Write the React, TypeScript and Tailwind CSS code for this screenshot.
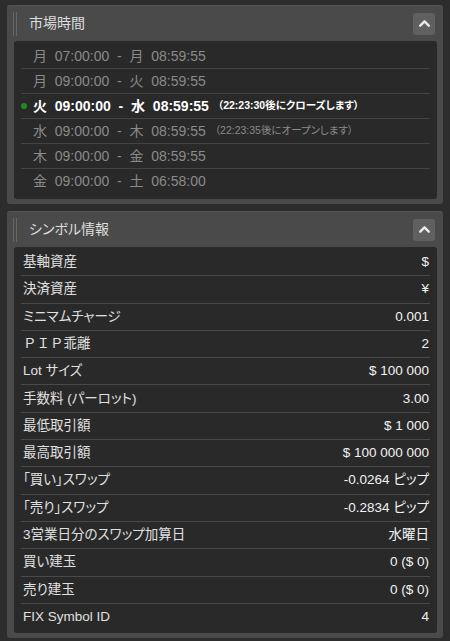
import { ChevronUp } from 'lucide-react';

const hours = [
    { from: '月  07:00:00', to: '月  08:59:55' },
    { from: '月  09:00:00', to: '火  08:59:55' },
    { from: '火  09:00:00', to: '水  08:59:55', note: '（22:23:30後にクローズします）', active: true },
    { from: '水  09:00:00', to: '木  08:59:55', note: '（22:23:35後にオープンします）' },
    { from: '木  09:00:00', to: '金  08:59:55' },
    { from: '金  09:00:00', to: '土  06:58:00' },
];

const symbolInfo: [string, string][] = [
    ['基軸資産', '$'],
    ['決済資産', '¥'],
    ['ミニマムチャージ', '0.001'],
    ['ＰＩＰ乖離', '2'],
    ['Lot サイズ', '$ 100 000'],
    ['手数料 (パーロット)', '3.00'],
    ['最低取引額', '$ 1 000'],
    ['最高取引額', '$ 100 000 000'],
    ['「買い」スワップ', '-0.0264 ピップ'],
    ['「売り」スワップ', '-0.2834 ピップ'],
    ['3営業日分のスワップ加算日', '水曜日'],
    ['買い建玉', '0 ($ 0)'],
    ['売り建玉', '0 ($ 0)'],
    ['FIX Symbol ID', '4'],
];

const PanelHeader = ({ title }: { title: string }) => (
    <div className="h-[35px] flex items-center pl-[6px] pr-[8px]">
        <div className="flex gap-[2px] h-[24px]">
            <div className="w-px h-full bg-[#666]" />
            <div className="w-px h-full bg-[#666]" />
        </div>
        <span className="ml-[12px] text-[14px] text-[#dedede]">{title}</span>
        <button className="ml-auto w-[22px] h-[22px] rounded-[3px] bg-[#606060] flex items-center justify-center">
            <ChevronUp size={17} strokeWidth={3.4} className="text-[#e8e8e8]" />
        </button>
    </div>
);

export default function App() {
    return (
        <div className="w-[450px] h-[641px] bg-[#2d2d2d] pt-[5px] px-[7px] font-['Liberation_Sans','Noto_Sans_CJK_JP',sans-serif] [font-feature-settings:'palt']">
            {/* 市場時間 */}
            <div className="bg-[#4a4a4a] border-t border-[#555] rounded-[3px] pb-[5px]">
                <PanelHeader title="市場時間" />
                <div className="bg-[#292929] rounded-[3px] ml-[7px] mr-[6px] px-[7px] pt-[3px] pb-[5px]">
                    {hours.map((h, i) => (
                        <div
                            key={i}
                            className={`h-[25px] flex items-center whitespace-pre text-[14px] ${i < hours.length - 1 ? 'border-b border-[#444]' : ''} ${h.active ? 'text-white font-bold' : 'text-[#8a8a8a]'}`}
                        >
                            <span className="w-[12px] flex justify-start">
                                {h.active && <span className="w-[6px] h-[6px] rounded-full bg-[#1c8c1c]" />}
                            </span>
                            <span>{h.from}</span>
                            <span>{'  -  '}</span>
                            <span>{h.to}</span>
                            {h.note && <span className="ml-[9px] text-[10.5px]">{h.note}</span>}
                        </div>
                    ))}
                </div>
            </div>

            {/* シンボル情報 */}
            <div className="mt-[7px] bg-[#4a4a4a] border-t border-[#555] rounded-[3px] pb-[5px]">
                <PanelHeader title="シンボル情報" />
                <div className="bg-[#292929] rounded-[3px] ml-[7px] mr-[6px] px-[7px] pt-[2px] pb-[2px]">
                    {symbolInfo.map(([label, value], i) => (
                        <div
                            key={label}
                            className={`h-[27.3px] flex items-center justify-between pl-[2px] pr-px text-[13.5px] ${i < symbolInfo.length - 1 ? 'border-b border-[#4a4a4a]' : ''}`}
                        >
                            <span className={`text-[#e0e0e0] ${label.startsWith('Ｐ') ? '[font-feature-settings:normal]' : ''}`}>{label}</span>
                            <span className="text-[#f2f2f2]">{value}</span>
                        </div>
                    ))}
                </div>
            </div>
        </div>
    );
}
